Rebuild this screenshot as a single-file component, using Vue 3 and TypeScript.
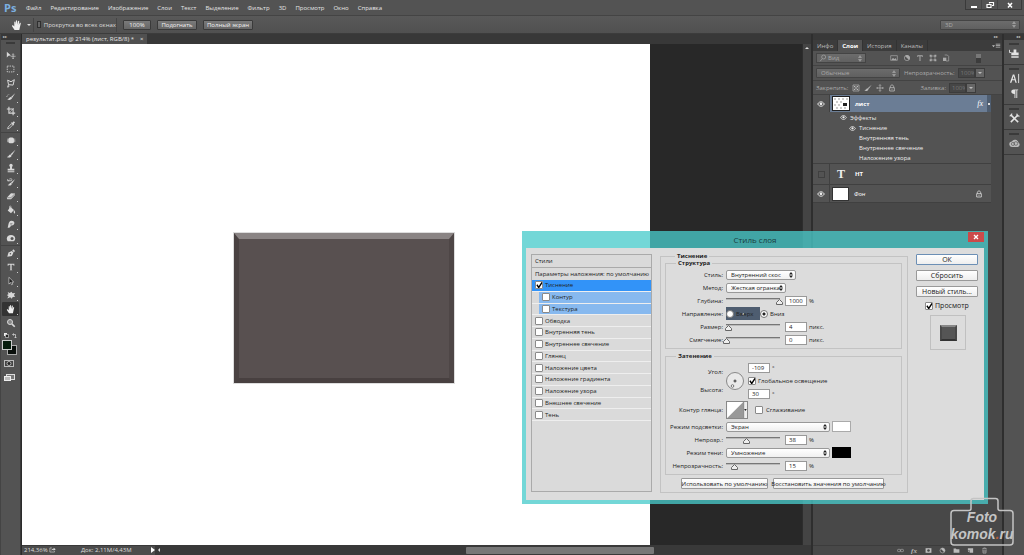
<script setup lang="ts">
import { ref } from 'vue'

const menus = ['Файл', 'Редактирование', 'Изображение', 'Слои', 'Текст', 'Выделение', 'Фильтр', '3D', 'Просмотр', 'Окно', 'Справка']

interface Tool { name: string; art: string; active?: boolean; plain?: boolean }

const hand = '<path d="M3.6 11 1.2 7.4c-.6-1 .5-1.5 1.1-.8l1 1V3.2c0-.9 1.1-.9 1.2 0l.3 2.4.1-3.7c0-.9 1.2-.9 1.2 0l.2 3.7.7-3.3c.2-.9 1.3-.6 1.2.2l-.4 3.6.9-2c.4-.8 1.3-.3 1.1.4L8.900 8.200 8.300 11z" fill="currentColor"/>'

const toolGroups: Tool[][] = [
  [
    { name: 'Перемещение', plain: true, art: '<path d="M1 2v7l2-2 3-.4z" fill="currentColor"/><path d="M8.500 4.500v6M5.500 7.500h6M7.500 5.500l1-1 1 1M7.500 9.500l1 1 1-1" stroke="currentColor" stroke-width=".8" fill="none"/>' },
    { name: 'Прямоугольная область', art: '<rect x="1.500" y="2.500" width="8" height="7" fill="none" stroke="currentColor" stroke-dasharray="1.700 1.100"/>' },
    { name: 'Лассо', art: '<path d="M2 2.500 6 4.500 10 2 8.500 8.500 3 8zM3 8l-1 3 2-1" fill="none" stroke="currentColor" stroke-width="1.200"/>' },
    { name: 'Быстрое выделение', art: '<path d="M11 1.500 6 6l1.300 1.300z" fill="currentColor"/><path d="M6 6c-2 0-2 2.500-4.500 2.700 2 1.500 5.200.8 5.800-1.400z" fill="currentColor"/><path d="M1 6a3 3 0 0 1 3-3" fill="none" stroke="currentColor" stroke-dasharray="1.200 1"/>' },
    { name: 'Рамка', art: '<path d="M3.500 1v7.500H11M1 3.500h7.500V11" fill="none" stroke="currentColor" stroke-width="1.300"/><path d="M4 8 9.500 2.500" stroke="currentColor" stroke-width=".6"/>' },
    { name: 'Пипетка', art: '<path d="M2 10.500 2.500 8.500 6.500 4.500l1.500 1.500-4 4z" fill="none" stroke="currentColor"/><path d="m6 3.500 3 3 .8-.8-.7-.8 1.700-1.900-1.400-1.400-1.900 1.700-.7-.7z" fill="currentColor"/>' },
  ],
  [
    { name: 'Восстанавливающая кисть', art: '<rect x="3" y="3" width="6.500" height="7" rx="2" fill="currentColor"/><path d="M1.200 5h10M1.200 6.500h10M1.200 8h10" stroke="currentColor" stroke-width=".7"/>' },
    { name: 'Кисть', art: '<path d="M11.300 1 5.500 6.200 7 7.500z" fill="currentColor"/><path d="M5.300 6.500C3.500 6.500 3.700 9 1 9.500c2 1.300 5.500.8 5.700-1.800z" fill="currentColor"/>' },
    { name: 'Штамп', art: '<circle cx="6" cy="3" r="2" fill="currentColor"/><path d="M5 4h2l.3 3H10v2H2V7h2.700zM2 10h8v1H2z" fill="currentColor"/>' },
    { name: 'Архивная кисть', art: '<path d="M11 2.500 6 6.500 7.200 8z" fill="currentColor"/><path d="M6 6.800c-2 0-1.500 2-4 2.700 2 1.300 4.800.8 5-1.400z" fill="currentColor"/><path d="M2 4.500h4.500c2-2-.8-3-2.500-2M2 2.500v2h2" fill="none" stroke="currentColor" stroke-width=".9"/>' },
    { name: 'Ластик', art: '<path d="m1 8 5-5.200 4.800.2v1.800L6 9.800 1.500 10z" fill="currentColor"/><path d="m1.500 8 4.300.2L10.500 3.500" fill="none" stroke="#555" stroke-width=".7"/>' },
    { name: 'Заливка', art: '<path d="M2 6.500 5.500 2.500 9.500 6 6 10z" fill="currentColor"/><path d="M4.200 5V2c0-1.200 1.700-1.200 1.700 0v2" fill="none" stroke="currentColor" stroke-width=".8"/><path d="M9.500 6c1.800 1.200 1.800 4 .8 4.300S9 8 9.500 6" fill="currentColor"/>' },
    { name: 'Палец', art: '<path d="m2 10.500 1-4.500c.5-2.300 1.500-4 3.500-4 2.500 0 4 1.500 3.500 3.500-.4 1.800-2 2.500-3.500 2.300L4 10.500z" fill="currentColor"/><path d="M5 5.500h2.800M5 7h2" stroke="#555" stroke-width=".6"/>' },
    { name: 'Губка', art: '<path d="M1 6.500C1 4 3 2.500 6 2.500s5 1.500 5 4-1.500 3.500-3 3.500H3C1.700 10 1 8 1 6.500z" fill="currentColor"/><circle cx="7.300" cy="6.700" r="1.800" fill="#555"/>' },
  ],
  [
    { name: 'Перо', art: '<path d="M1.500 10.500 3 5.500l4-2 2 2-2 4z" fill="currentColor"/><path d="m7.500 3 1.300-1.500 2 2L9.500 5z" fill="currentColor"/><circle cx="5.300" cy="6.800" r=".9" fill="#555"/>' },
    { name: 'Горизонтальный текст', art: '<path d="M2 2h8v2.500H9.200L8.700 3.200H6.800v6l1 .8h-3.600l1-.8v-6H3.300l-.5 1.300H2z" fill="currentColor"/>' },
    { name: 'Выделение контура', art: '<path d="M3.500 1.500v8.200l2-1.900 1.200 2.700 1.400-.6L7 7.200h2.300z" fill="#222" stroke="currentColor" stroke-width=".8"/>' },
    { name: 'Произвольная фигура', art: '<path d="m2 2.500 2.500 1L6.500 2l1.300 1.800L11 3.500 9.500 6l1.500 2-3 .3L7 10.500 5 8.800l-3.500 1.400L3 7.500 1 6l2-.8z" fill="currentColor"/>' },
    { name: 'Рука', active: true, art: hand },
    { name: 'Масштаб', plain: true, art: '<circle cx="4.800" cy="4.800" r="3" fill="#888" stroke="currentColor" stroke-width="1.200"/><path d="m7 7 3.500 3.500" stroke="currentColor" stroke-width="2"/>' },
  ],
]

const styleRows = ref([
  { label: 'Тиснение', on: true, kind: 'current' },
  { label: 'Контур', on: false, kind: 'child' },
  { label: 'Текстура', on: false, kind: 'child' },
  { label: 'Обводка', on: false, kind: '' },
  { label: 'Внутренняя тень', on: false, kind: '' },
  { label: 'Внутреннее свечение', on: false, kind: '' },
  { label: 'Глянец', on: false, kind: '' },
  { label: 'Наложение цвета', on: false, kind: '' },
  { label: 'Наложение градиента', on: false, kind: '' },
  { label: 'Наложение узора', on: false, kind: '' },
  { label: 'Внешнее свечение', on: false, kind: '' },
  { label: 'Тень', on: false, kind: '' },
])

const depth = ref(1000)
const size = ref(4)
const soften = ref(0)
const lightOpacity = ref(38)
const shadeOpacity = ref(15)
const direction = ref('down')
const angle = ref(-109)
const altitude = ref(30)
const globalLight = ref(true)
const smooth = ref(false)
const preview = ref(true)
const scrollAll = ref(false)

const effects = ['Тиснение', 'Внутренняя тень', 'Внутреннее свечение', 'Наложение узора']
const panelTabs = ['Инфо', 'Слои', 'История', 'Каналы']

const filterIcons = [
  '<path d="M1 2.500h10v7H1z" fill="none" stroke="currentColor"/><path d="m2 9 2.500-3.500L6.500 8 8 6l2 3z" fill="currentColor"/>',
  '<circle cx="6" cy="6" r="4" fill="none" stroke="currentColor"/><path d="M3 3a4 4 0 0 1 6 6z" fill="currentColor"/>',
  '<path d="M2 2h8v2.500H9L8.700 3.200H6.700v6l1 .8H4.300l1-.8v-6h-2L3 4.500H2z" fill="currentColor"/>',
  '<path d="M3 3h6v6H3z" fill="none" stroke="currentColor"/><path d="M1 1h3v3H1zM8 1h3v3H8zM1 8h3v3H1zM8 8h3v3H8z" fill="currentColor"/>',
  '<path d="M4 1.500h4l2 2v7H6" fill="none" stroke="currentColor"/><path d="M1.500 5.500h5v5h-5z" fill="currentColor"/>',
]
const lockIcons = [
  '<path d="M1.500 1.500h9v9h-9z" fill="none" stroke="currentColor"/><path d="M3 3h2v2H3zM7 3h2v2H7zM5 5h2v2H5zM3 7h2v2H3zM7 7h2v2H7z" fill="currentColor"/>',
  '<path d="M11.500 1 5.500 6.200 7 7.500z" fill="currentColor"/><path d="M5.300 6.500C3.500 6.500 3.700 9 .5 9.700c2.500 1.300 6 .6 6.200-2z" fill="currentColor"/>',
  '<path d="M6 1v10M1 6h10M4.500 2.500 6 1l1.500 1.500M4.500 9.500 6 11l1.500-1.500M2.500 4.500 1 6l1.500 1.500M9.500 4.500 11 6 9.500 7.500" fill="none" stroke="currentColor"/>',
  '<path d="M3.500 5.500V4c0-3.300 5-3.300 5 0v1.500" fill="none" stroke="currentColor" stroke-width="1.200"/><path d="M2.500 5.500h7v5h-7z" fill="none" stroke="currentColor" stroke-width="1.200"/><path d="M5.500 7h1v2h-1z" fill="currentColor"/>',
]
const footerIcons = [
  { name: 'Связать слои', art: '<rect x=".7" y="4" width="5.500" height="4" rx="2" fill="none" stroke="currentColor"/><rect x="5.800" y="4" width="5.500" height="4" rx="2" fill="none" stroke="currentColor"/>' },
  { name: 'Стиль слоя', art: 'fx' },
  { name: 'Маска', art: '<path d="M1 2h10v8H1z" fill="currentColor"/><circle cx="6" cy="6" r="2.200" fill="#484848"/>' },
  { name: 'Корректирующий слой', art: '<circle cx="6" cy="6" r="4.200" fill="none" stroke="currentColor"/><path d="M3 3a4.200 4.200 0 0 1 6 6z" fill="currentColor"/>' },
  { name: 'Группа', art: '<path d="M1 2.500h4l1 1.200h5V10H1z" fill="currentColor"/>' },
  { name: 'Новый слой', art: '<path d="M1.500 2h9v8H5V6H1.500z" fill="currentColor"/><path d="M1.500 7h2.700v3z" fill="currentColor"/>' },
  { name: 'Удалить', art: '<path d="M2 3h8M4.500 3V1.500h3V3M3 4.500l.5 6h5l.5-6M5 5v4.500M7 5v4.500" fill="none" stroke="currentColor"/>' },
]
const dock = [
  [{ name: 'Источник клонов', art: '<path d="M5 1.500h3v3.500h2.500v3h-8V5H5zM2.500 9h8v1.500h-8z" fill="currentColor"/><path d="M.5 2v3h2" fill="none" stroke="currentColor"/>' }],
  [
    { name: 'Символ', art: '<path d="M1 10.500 4.200 1.500h1.600L8.500 10.500H7L6.300 8H3.500l-.9 2.500zM3.900 6.700H6L5 3.300z" fill="currentColor"/><path d="M10.500 1v10" stroke="currentColor"/>' },
    { name: 'Абзац', art: '<path d="M5 1.500h5v1H9v8.500H8V2.500H7V11H6V6.500C1.500 6.500 1.500 1.500 5 1.500z" fill="currentColor"/>' },
  ],
  [{ name: 'Инструменты', art: '<path d="m2 2 8 8M10 2 2 10" stroke="currentColor" stroke-width="1.700"/><path d="M.8 3.800 3.500.8M8.500.8l.5 2.200 2.500.5" fill="none" stroke="currentColor" stroke-width="1.200"/>' }],
  [{ name: 'Creative Cloud', art: '<path d="M3.500 9.700a3 3 0 0 1-.5-6 4.200 4.200 0 0 1 7.500 1.500 2.500 2.500 0 0 1-.8 4.500z" fill="#bbb"/><circle cx="4.300" cy="6.500" r="1.700" fill="none" stroke="#555" stroke-width=".7"/><circle cx="7.500" cy="6" r="2" fill="none" stroke="#555" stroke-width=".7"/>' }],
]
const eye = '<path d="M1 6c2.500-4.500 7.500-4.500 10 0-2.500 4.500-7.500 4.500-10 0z" fill="none" stroke="currentColor" stroke-width="1.300"/><circle cx="6" cy="5.700" r="2" fill="currentColor"/>'
</script>

<template>
  <div class="app">
    <header class="menubar">
      <span class="logo">Ps</span>
      <nav class="menus">
        <button v-for="m in menus" :key="m" type="button">{{ m }}</button>
      </nav>
      <div class="window-buttons">
        <button type="button" aria-label="Свернуть"><svg viewBox="0 0 12 8"><path d="M3 6h6" stroke="#fff" stroke-width="2" /></svg></button>
        <button type="button" aria-label="Восстановить"><svg viewBox="0 0 12 8"><path d="M5.500 2.500v-1h4v3H8M3 3.500h4v3H3z" fill="none" stroke="#fff" stroke-width="1.200" /></svg></button>
        <button type="button" class="wide" aria-label="Закрыть"><svg viewBox="0 0 12 8"><path d="m4 2 4 4.500M8 2 4 6.500" stroke="#fff" stroke-width="1.500" /></svg></button>
      </div>
    </header>

    <div class="options">
      <button type="button" class="hand" aria-label="Рука"><svg viewBox="0 0 12 12" v-html="hand"></svg><i class="caret"></i></button>
      <label class="scroll-all"><input v-model="scrollAll" type="checkbox" class="dark-check">Прокрутка во всех окнах</label>
      <div class="zooms">
        <button type="button" class="z1">100%</button>
        <button type="button" class="z2">Подогнать</button>
        <button type="button" class="z3">Полный экран</button>
      </div>
      <select class="dark-select workspace" aria-label="Рабочая среда"><option>3D</option></select>
    </div>

    <div class="work">
      <aside class="tools">
        <div class="strip">▸▸</div>
        <div class="grip"></div>
        <div v-for="(g, gi) in toolGroups" :key="gi" class="tool-group">
          <button v-for="t in g" :key="t.name" type="button" :aria-label="t.name" class="tool" :class="{ active: t.active, more: !t.plain }">
            <svg viewBox="0 0 12 12" v-html="t.art"></svg>
          </button>
        </div>
        <svg class="colors" viewBox="0 0 18 54">
          <path d="M3 3h3v3H3z" fill="#eee" /><path d="M4.500 4.500h3v3h-3z" fill="#222" stroke="#ddd" stroke-width=".6" />
          <path d="M12 4.500h2.500V8M13 3.500l-1.500 1L13 5.500M13.500 7l1 1 1-1" fill="none" stroke="#ddd" stroke-width=".7" />
          <rect x="6.500" y="15.500" width="9" height="9" fill="#0a0f0c" stroke="#aaa" />
          <rect x="1.500" y="10.500" width="9" height="9" fill="#071d0d" stroke="#ccc" />
          <rect x="3.500" y="30.500" width="9" height="6" fill="#444" stroke="#bbb" /><circle cx="8" cy="33.500" r="2" fill="#222" stroke="#ccc" stroke-width=".8" />
          <rect x="5.500" y="44.500" width="8" height="5" fill="#777" stroke="#ddd" /><rect x="3.500" y="46.500" width="6" height="4" fill="#bbb" stroke="#eee" />
        </svg>
      </aside>

      <section class="document">
        <div class="doc-tabs"><button type="button" class="doc-tab">результат.psd @ 214% (лист, RGB/8) *<span>×</span></button></div>
        <div class="viewport">
          <div class="canvas"><div class="bevel"></div></div>
          <div class="v-scroll"><i></i></div>
        </div>
        <footer class="status">
          <div class="status-info">
            <span class="percent">214,36%</span>
            <svg viewBox="0 0 12 10"><path d="M5 1.500H1.500v7h8V7" fill="none" stroke="#ddd" /><path d="M4 6c0-2.500 2-3.300 4-3.300V1l3.500 2.700L8 6.300V4.700C6 4.700 5 5 4 6z" fill="#ddd" /></svg>
            <span class="doc-size">Док: 2,11М/4,43М</span>
            <i class="play"></i>
          </div>
          <i class="back"></i>
          <div class="h-thumb"></div>
        </footer>
      </section>

      <aside class="panel">
        <div class="strip right">▸▸</div>
        <div class="panel-tabs">
          <button v-for="t in panelTabs" :key="t" type="button" :class="{ on: t === 'Слои' }">{{ t }}</button>
          <svg class="panel-menu" viewBox="0 0 12 8"><path d="M0 3h4L2 5.500zM5 1h6v1H5zM5 3h6v1H5zM5 5h6v1H5z" fill="#bbb" /></svg>
        </div>
        <div class="panel-row">
          <div class="kind"><svg viewBox="0 0 12 12"><circle cx="7" cy="4.500" r="3" fill="none" stroke="currentColor" /><path d="M5 7 1.500 11" stroke="currentColor" /></svg>
            <select class="dark-select" aria-label="Фильтр слоёв"><option>Вид</option></select></div>
          <div class="icons filter"><svg v-for="(a, i) in filterIcons" :key="i" viewBox="0 0 12 12" v-html="a"></svg></div>
          <i class="switch"></i>
        </div>
        <div class="panel-row">
          <select class="dark-select blend" aria-label="Режим наложения"><option>Обычные</option></select>
          <label class="amount">Непрозрачность:<input value="100%" readonly><i class="drop"></i></label>
        </div>
        <div class="panel-row last">
          <span>Закрепить:</span>
          <div class="icons lock"><svg v-for="(a, i) in lockIcons" :key="i" viewBox="0 0 12 12" v-html="a"></svg></div>
          <label class="amount">Заливка:<input value="100%" readonly><i class="drop"></i></label>
        </div>
        <div class="layers">
          <div class="layer selected">
            <button type="button" class="eye" aria-label="Видимость"><svg viewBox="0 0 12 12" v-html="eye"></svg></button>
            <div class="layer-body">
              <svg class="thumb" viewBox="0 0 18 15"><rect x=".5" y=".5" width="17" height="14" fill="#fff" stroke="#222" /><path d="M2 2h2v2H2zM6 2h2v2H6zM10 2h2v2h-2zM14 2h2v2h-2zM4 5h2v2H4zM8 5h2v2H8zM2 8h2v2H2zM6 8h2v2H6zM4 11h2v2H4zM8 11h2v2H8zM12 11h2v2h-2z" fill="#ccc" /><path d="M11 7h4v3h-4z" fill="#222" /></svg>
              <b class="name">лист</b><em class="fx">fx</em><i class="up"></i>
            </div>
          </div>
          <div class="effects">
            <div class="effect root"><svg viewBox="0 0 12 12" v-html="eye"></svg>Эффекты</div>
            <div v-for="(e, i) in effects" :key="e" class="effect"><svg v-if="i === 0" viewBox="0 0 12 12" v-html="eye"></svg><span>{{ e }}</span></div>
          </div>
          <div class="layer">
            <button type="button" class="eye" aria-label="Видимость"><i class="hidden-eye"></i></button>
            <div class="layer-body tall"><span class="type">T</span><b class="name">НТ</b></div>
          </div>
          <div class="layer">
            <button type="button" class="eye" aria-label="Видимость"><svg viewBox="0 0 12 12" v-html="eye"></svg></button>
            <div class="layer-body"><div class="white-thumb"></div><em class="name">Фон</em><svg class="padlock" viewBox="0 0 12 12" v-html="lockIcons[3]"></svg></div>
          </div>
        </div>
        <footer class="panel-footer">
          <button v-for="f in footerIcons" :key="f.name" type="button" :aria-label="f.name">
            <em v-if="f.art === 'fx'">fx</em><svg v-else viewBox="0 0 12 12" v-html="f.art"></svg>
          </button>
        </footer>
      </aside>

      <aside class="dock">
        <div class="strip right">◂◂</div>
        <div v-for="(g, i) in dock" :key="i" class="dock-group">
          <div class="grip"></div>
          <button v-for="d in g" :key="d.name" type="button" :aria-label="d.name"><svg viewBox="0 0 12 12" v-html="d.art"></svg></button>
        </div>
      </aside>
    </div>

    <div class="dialog" role="dialog" aria-labelledby="dlg-title">
      <div class="title"><h1 id="dlg-title">Стиль слоя</h1><button type="button" class="close" aria-label="Закрыть"><svg viewBox="0 0 8 8"><path d="m2 2 4 4M6 2 2 6" stroke="#fff" stroke-width="1.300" /></svg></button></div>
      <div class="dialog-body">
        <div class="styles">
          <div class="styles-head">Стили</div>
          <div class="styles-params">Параметры наложения: по умолчанию</div>
          <div class="style-rows">
            <label v-for="s in styleRows" :key="s.label" class="style-row" :class="s.kind"><span class="fill"><input v-model="s.on" type="checkbox" class="check">{{ s.label }}</span></label>
          </div>
        </div>

        <fieldset class="outer">
          <legend>Тиснение</legend>
          <fieldset class="group">
            <legend>Структура</legend>
            <div class="row"><label for="f-style">Стиль:</label><select id="f-style" class="select w-style"><option>Внутренний скос</option></select></div>
            <div class="row"><label for="f-method">Метод:</label><select id="f-method" class="select w-method"><option>Жесткая огранка</option></select></div>
            <div class="row"><label for="f-depth">Глубина:</label><input id="f-depth" v-model="depth" type="range" min="1" max="1000"><input v-model="depth" class="num" aria-label="Глубина, %"><span>%</span></div>
            <div class="row"><span class="lbl">Направление:</span><label class="radio up"><input v-model="direction" type="radio" value="up">Вверх</label><label class="radio"><input v-model="direction" type="radio" value="down">Вниз</label></div>
            <div class="row"><label for="f-size">Размер:</label><input id="f-size" v-model="size" type="range" min="0" max="100"><input v-model="size" class="num" aria-label="Размер, пикс."><span>пикс.</span></div>
            <div class="row"><label for="f-soft">Смягчение:</label><input id="f-soft" v-model="soften" type="range" min="0" max="16"><input v-model="soften" class="num" aria-label="Смягчение, пикс."><span>пикс.</span></div>
          </fieldset>
          <fieldset class="group">
            <legend>Затенение</legend>
            <div class="light">
              <div class="light-labels"><label for="f-angle">Угол:</label><label for="f-alt">Высота:</label></div>
              <svg class="dial" viewBox="0 0 18 18"><circle cx="9" cy="9" r="8.500" fill="#e9e9e9" stroke="#888" /><path d="M7.500 9h3M9 7.500v3" stroke="#333" /><circle cx="6.500" cy="14" r="1.300" fill="#fff" stroke="#555" stroke-width=".8" /></svg>
              <div class="light-fields">
                <div><input id="f-angle" v-model="angle" class="num"><span>°</span></div>
                <label><input v-model="globalLight" type="checkbox" class="check">Глобальное освещение</label>
                <div><input id="f-alt" v-model="altitude" class="num"><span>°</span></div>
              </div>
            </div>
            <div class="row contour"><span class="lbl">Контур глянца:</span><button type="button" class="curve" aria-label="Контур глянца"><svg viewBox="0 0 22 18"><path d="M0 0h18v18H0z" fill="#fff" /><path d="M0 18 18 0v18z" fill="#999" /><path d="M18.500 0v18" stroke="#777" /><path d="M19 8h3l-1.500 2z" fill="#222" /></svg></button><label class="smooth"><input v-model="smooth" type="checkbox" class="check">Сглаживание</label></div>
            <div class="row"><label for="f-light">Режим подсветки:</label><select id="f-light" class="select w-mode"><option>Экран</option></select><button type="button" class="swatch" aria-label="Цвет подсветки"></button></div>
            <div class="row"><label for="f-lo">Непрозр.:</label><input id="f-lo" v-model="lightOpacity" type="range" min="0" max="100"><input v-model="lightOpacity" class="num" aria-label="Непрозр., %"><span>%</span></div>
            <div class="row"><label for="f-shade">Режим тени:</label><select id="f-shade" class="select w-mode"><option>Умножение</option></select><button type="button" class="swatch black" aria-label="Цвет тени"></button></div>
            <div class="row"><label for="f-so">Непрозрачность:</label><input id="f-so" v-model="shadeOpacity" type="range" min="0" max="100"><input v-model="shadeOpacity" class="num" aria-label="Непрозрачность, %"><span>%</span></div>
          </fieldset>
          <div class="defaults"><button type="button" class="btn d1">Использовать по умолчанию</button><button type="button" class="btn d2">Восстановить значения по умолчанию</button></div>
        </fieldset>

        <div class="actions">
          <button type="button" class="btn primary">ОК</button>
          <button type="button" class="btn">Сбросить</button>
          <button type="button" class="btn">Новый стиль...</button>
          <label class="preview-check"><input v-model="preview" type="checkbox" class="check">Просмотр</label>
          <div class="preview"><i></i></div>
        </div>
      </div>
    </div>

    <div class="watermark">
      <svg viewBox="0 0 66 50"><path d="M5 13.500h15q2 0 2-2V4q0-2.500 2.500-2.500h22Q49 1.500 49 4v7.500q0 2 2 2h10q3 0 3 3V45q0 3-3 3H5q-3 0-3-3V16.500q0-3 3-3z" fill="none" stroke="#c4c4c4" stroke-width="1.500" /></svg>
      <p><span>Foto</span><span>komok<b>.</b>ru</span></p>
    </div>
  </div>
</template>

<style>
html, body { margin: 0; background: #535353; }
</style>

<style scoped>
.app { position: relative; display: flex; flex-direction: column; min-height: 100vh; overflow: hidden; background: #535353; color: #ddd; font: 6px/8px "Open Sans", "Noto Sans", sans-serif; }
.app * { box-sizing: border-box; }
button, input, select { font: inherit; color: inherit; margin: 0; padding: 0; border: 0; background: none; border-radius: 0; }
button { display: flex; align-items: center; justify-content: center; white-space: nowrap; }
select, input { appearance: none; outline: none; }
label, span { white-space: nowrap; }
svg { display: block; flex: none; }

.menubar { display: flex; height: 15px; align-items: center; background: #535353; }
.logo { width: 22px; padding-left: 4px; color: #7cb0e0; font: bold 11px/14px "Open Sans", sans-serif; }
.menus { display: flex; flex: 1; gap: 9px; padding-left: 4px; color: #e6e6e6; }
.window-buttons { display: flex; align-self: flex-start; height: 10px; margin-right: 2px; border: 1px solid #3a3a3a; border-top: 0; }
.window-buttons button { width: 16px; border-right: 1px solid #444; }
.window-buttons .wide { width: 23px; border: 0; }
.window-buttons svg { width: 12px; height: 8px; }

.options { display: flex; align-items: center; height: 19px; border-top: 1px solid #444; border-bottom: 1px solid #3c3c3c; background: linear-gradient(#595959, #505050); }
.hand { width: 34px; height: 14px; padding-left: 8px; gap: 4px; border-right: 1px solid #454545; color: #eee; }
.hand svg { width: 12px; height: 12px; }
.caret { border: 2px solid transparent; border-top-color: #ddd; border-bottom: 0; }
.scroll-all { display: flex; align-items: center; gap: 3px; width: 83px; height: 14px; padding-left: 3px; border-right: 1px solid #454545; }
.dark-check { width: 7px; height: 7px; border: 1px solid #2f2f2f; background: #666; }
.zooms { display: flex; flex: 1; gap: 6px; padding-left: 6px; }
.zooms button { height: 10px; border: 1px solid #3a3a3a; border-radius: 1px; background: linear-gradient(#7a7a7a, #666); color: #f2f2f2; }
.z1 { width: 28px; } .z2 { width: 40px; } .z3 { width: 50px; }
.dark-select { height: 10px; padding: 0 4px; border: 1px solid #444; border-radius: 1px; color: #aaa; background: url("data:image/svg+xml,%3Csvg xmlns='http://www.w3.org/2000/svg' width='5' height='7'%3E%3Cpath d='M0 3 2 0l2 3zM0 4l2 3 2-3z' fill='%23999'/%3E%3C/svg%3E") right 2px center no-repeat, linear-gradient(#6c6c6c, #606060); }
.workspace { width: 80px; margin-right: 4px; }

.work { display: flex; flex: 1; }
.strip { height: 6px; padding-left: 2px; background: #383838; color: #ccc; font: 4px/6px "DejaVu Sans", sans-serif; }
.strip.right { padding: 0 4px 0 0; text-align: right; }
.grip { height: 2px; margin: 2px 5px 1px; background: #3a3a3a; }
.tools { width: 21px; border-left: 1px solid #444; border-right: 1px solid #3a3a3a; }
.tools .grip { margin-bottom: 4px; }
.tool-group + .tool-group { border-top: 1px solid #434343; }
.tool { position: relative; width: 17px; height: 14px; margin-left: 1px; color: #d8d8d8; }
.tool svg { width: 10px; height: 10px; }
.tool.active { background: #333; color: #eee; border-radius: 1px; }
.tool.more::after { content: ""; position: absolute; right: 1px; bottom: 1px; width: 1px; height: 1px; background: #ccc; }
.colors { width: 18px; height: 54px; }

.document { display: flex; flex: 1; flex-direction: column; min-width: 0; border-left: 1px solid #2b2b2b; background: #393939; }
.doc-tabs { display: flex; height: 10px; background: #383838; }
.doc-tab { gap: 6px; padding: 0 4px; background: #505050; color: #e4e4e4; }
.viewport { display: flex; flex: 1; background: #282828; }
.canvas { width: 628px; background: #fff; }
.bevel { width: 220px; height: 150px; margin: 189px 0 0 212px; border: 5px solid; border-top-width: 6px; border-color: #8a8484 #4e4646 #484040 #4a4242; background: #585050; outline: 1px solid #ddd; }
.v-scroll { width: 9px; margin-left: auto; padding-top: 3px; background: #444; border-left: 1px solid #2d2d2d; }
.v-scroll i { display: block; width: 0; margin: 0 auto; border: 2px solid transparent; border-bottom-color: #ddd; border-top: 0; }
.status { display: flex; align-items: center; height: 10px; background: #393939; }
.status-info { display: flex; align-items: center; width: 133px; height: 9px; padding-left: 2px; background: #4c4c4c; }
.status-info svg { width: 7px; height: 6px; margin-left: 3px; }
.percent { width: 22px; }
.doc-size { flex: 1; padding-left: 25px; }
.play { border: 3px solid transparent; border-left: 4px solid #fff; border-right: 0; }
.back { margin-left: 3px; border: 2px solid transparent; border-right-color: #ddd; border-left: 0; }
.h-thumb { width: 188px; height: 7px; margin-left: 306px; background: #777; border-radius: 1px; }

.panel { display: flex; flex-direction: column; width: 193px; border-left: 2px solid #2e2e2e; border-right: 2px solid #2e2e2e; background: #484848; }
.panel-tabs { display: flex; height: 11px; background: #3c3c3c; color: #bbb; }
.panel-tabs button { padding: 0 4px; border-right: 1px solid #333; }
.panel-tabs .on { background: #535353; color: #fff; font-weight: bold; }
.panel-menu { width: 9px; height: 6px; margin: 3px 1px 0 auto; }
.panel-row { display: flex; align-items: center; height: 15px; padding-left: 3px; border-bottom: 1px solid #434343; background: #535353; color: #aaa; }
.panel-row.last { height: 14px; }
.kind { display: flex; align-items: center; width: 50px; height: 10px; border: 1px solid #444; background: #646464; }
.kind svg { width: 8px; height: 8px; margin-left: 2px; }
.kind select { flex: 1; height: 8px; padding: 0 1px; border: 0; }
.icons { display: flex; align-items: center; color: #aaa; }
.icons svg { width: 8px; height: 8px; }
.filter { gap: 5px; padding-left: 24px; }
.lock { gap: 4px; padding-left: 4px; flex: 1; color: #bbb; }
.switch { width: 5px; height: 9px; margin-left: 26px; background: linear-gradient(#777 40%, #3c3c3c 40%); }
.blend { width: 84px; }
.amount { display: flex; align-items: center; margin-left: 4px; }
.last .amount { margin: 0 26px 0 0; }
.amount input { width: 17px; height: 10px; margin-left: 3px; padding-left: 2px; border: 1px solid #3c3c3c; background: #464646; color: #777; }
.drop { display: flex; align-items: center; justify-content: center; width: 10px; height: 10px; border: 1px solid #3c3c3c; background: #666; }
.drop::after { content: ""; border: 2px solid transparent; border-top-color: #bbb; border-bottom: 0; }
.layers { flex: 1; margin-right: 11px; background: #484848; }
.layer { display: flex; background: #535353; border-bottom: 1px solid #404040; }
.eye { width: 17px; border-right: 1px solid #404040; color: #eee; }
.eye svg { width: 8px; height: 8px; }
.layer-body { display: flex; flex: 1; align-items: center; height: 17px; padding-left: 2px; }
.layer-body.tall { height: 20px; }
.selected { border-bottom: 0; }
.selected .layer-body { background: #6b7d95; }
.thumb { width: 18px; height: 15px; }
.name { margin-left: 5px; color: #fff; }
.fx { margin-left: auto; padding-right: 4px; font: italic 8px/9px "Liberation Serif", serif; color: #fff; }
.up { align-self: stretch; width: 4px; background: linear-gradient(#ddd, #ddd) center / 2px 2px no-repeat, #4e5d70; }
.effects { height: 52px; padding-left: 46px; border-bottom: 1px solid #404040; background: #535353; color: #eee; }
.effect { display: flex; align-items: center; height: 10px; position: relative; }
.effect svg { width: 7px; height: 7px; margin: 0 3px 0 -10px; }
.effect.root { height: 11px; margin-left: -10px; }
.effect.root svg { margin: 0 3px 0 0; }
.effect.root { margin-left: -19px; }
.hidden-eye { width: 7px; height: 7px; border: 1px solid #404040; }
.type { width: 18px; text-align: center; font: bold 12px/14px "Liberation Serif", serif; color: #eee; }
.white-thumb { width: 17px; height: 14px; border: 1px solid #333; background: #fff; }
.padlock { width: 8px; height: 8px; margin: 0 8px 0 auto; color: #ddd; }
.panel-footer { display: flex; align-items: center; gap: 6px; height: 10px; padding-left: 83px; border-top: 1px solid #3c3c3c; color: #bbb; }
.panel-footer button { width: 8px; }
.panel-footer svg { width: 7px; height: 7px; }
.panel-footer em { font: italic bold 7px/8px "Liberation Serif", serif; }
.dock { width: 20px; }
.dock-group { padding: 1px 0 3px; border-bottom: 1px solid #3a3a3a; }
.dock-group button { width: 20px; height: 15px; color: #e4e4e4; }
.dock-group svg { width: 11px; height: 11px; }

.dialog { position: absolute; right: 36px; bottom: 51px; width: 466px; padding: 0 4px 4px; background: rgba(73, 203, 203, .77); color: #222; font-size: 6px; line-height: 8px; }
.title { display: flex; height: 17px; justify-content: center; }
h1 { margin: 0; font: 8px/17px "Open Sans", sans-serif; color: #1b3c3c; }
.close { position: absolute; top: 1px; right: 4px; width: 16px; height: 10px; background: #cb4a4a; }
.close svg { width: 8px; height: 8px; }
.dialog-body { display: flex; align-items: flex-start; padding: 5px 6px 7px 5px; background: #dcdcdc; }
.styles { align-self: stretch; width: 121px; margin: 1px 0; border: 1px solid #aaa; background: #dadada; }
.styles-head { height: 13px; padding-left: 3px; border-bottom: 1px solid #aaa; line-height: 13px; }
.styles-params { height: 12px; padding-left: 3px; line-height: 12px; white-space: nowrap; }
.style-rows { display: grid; height: 141px; grid-auto-rows: 1fr; }
.style-row { display: block; border-bottom: 1px solid #eee; }
.fill { display: flex; align-items: center; gap: 2px; height: 100%; padding-left: 3px; }
.current .fill { background: #3293f8; }
.child .fill { margin-left: 7px; background: #87b9ef; }
.check { flex: none; width: 8px; height: 8px; border: 1px solid #8a8a8a; border-radius: 1px; background: #fff; }
.check:checked { background: #fff url("data:image/svg+xml,%3Csvg xmlns='http://www.w3.org/2000/svg' viewBox='0 0 8 8'%3E%3Cpath d='m1.500 3.500 2 2.800L7 1' fill='none' stroke='%23000' stroke-width='1.500'/%3E%3C/svg%3E") center / 7px 7px no-repeat; }

fieldset { margin: 0; padding: 0; min-width: 0; border: 1px solid #c3c3c3; }
legend { height: 7px; margin-left: 10px; padding: 0 2px; font-weight: bold; line-height: 7px; }
.outer { width: 248px; margin-left: 8px; padding: 0 5px 3px 4px; }
.group { padding: 1px 0 2px; }
.group + .group { margin-top: 4px; }
.row { display: flex; align-items: center; height: 13px; }
.row > label:first-child, .lbl { flex: none; width: 57px; margin-right: 3px; text-align: right; }
.select { height: 10px; padding: 0 4px; border: 1px solid #999; border-radius: 2px; background: url("data:image/svg+xml,%3Csvg xmlns='http://www.w3.org/2000/svg' width='4' height='6'%3E%3Cpath d='M0 2.500 2 0l2 2.500zM0 3.500 2 6l2-2.500z' fill='%23222'/%3E%3C/svg%3E") right 2px center no-repeat, linear-gradient(#fff, #f0f0f0); }
.w-style { width: 70px; } .w-method { width: 60px; } .w-mode { width: 104px; }
.num { width: 22px; height: 10px; padding: 0 3px; border: 1px solid #999; background: #fff; }
.row > .num { margin: 0 2px 0 2px; }
input[type="range"] { width: 60px; height: 10px; margin-left: -3px; }
input[type="range"]::-webkit-slider-runnable-track { height: 10px; background: linear-gradient(#777 1px, #bbb 1px) center 2px / 54px 2px no-repeat; }
input[type="range"]::-webkit-slider-thumb { appearance: none; width: 7px; height: 6px; margin-top: 3px; background: url("data:image/svg+xml,%3Csvg xmlns='http://www.w3.org/2000/svg' width='7' height='6'%3E%3Cpath d='M.5 5.500v-2l3-3 3 3v2z' fill='%23eee' stroke='%23666'/%3E%3C/svg%3E") no-repeat; }
.radio { display: flex; align-items: center; gap: 2px; }
.radio.up { width: 34px; }
.radio input { width: 8px; height: 8px; border: 1px solid #777; border-radius: 50%; background: #fff; }
.radio input:checked { background: radial-gradient(circle, #222 1px, #fff 2px); }
.light { display: flex; align-items: center; height: 39px; }
.light-labels { display: flex; flex-direction: column; gap: 10px; width: 57px; margin-right: 3px; text-align: right; }
.dial { width: 18px; height: 18px; margin-right: 4px; }
.light-fields > * { display: flex; align-items: center; gap: 2px; height: 13px; }
.row.contour { height: 20px; }
.curve { width: 22px; height: 18px; border: 1px solid #888; background: #eee; }
.curve svg { width: 20px; height: 16px; }
.smooth { display: flex; align-items: center; gap: 3px; margin-left: 7px; }
.swatch { width: 19px; height: 11px; margin-left: 2px; border: 1px solid #aaa; background: #fff; }
.swatch.black { background: #000; border-color: #000; }
.btn { height: 11px; border: 1px solid #999; border-radius: 1px; background: linear-gradient(#fff, #eee); }
.defaults { display: flex; gap: 5px; margin-top: 3px; padding-left: 16px; }
.d1 { width: 87px; } .d2 { width: 111px; }
.actions { display: flex; flex: 1; flex-direction: column; gap: 5px; margin: 1px 0 0 8px; }
.actions .btn { font-size: 7px; }
.primary { border-color: #6c8fb5; }
.preview-check { display: flex; align-items: center; gap: 2px; height: 8px; padding-left: 9px; font-size: 7px; }
.preview { display: flex; align-items: center; justify-content: center; width: 36px; height: 35px; margin-left: 14px; border: 1px solid #c0c0c0; }
.preview i { width: 17px; height: 16px; border: 2px solid; border-color: #888 #484848 #333 #484848; background: #555; }

.watermark { position: absolute; right: 9px; bottom: 8px; width: 66px; height: 50px; color: #c4c4c4; }
.watermark svg { width: 66px; height: 50px; }
.watermark p { position: absolute; top: 12px; left: 0; width: 66px; margin: 0; text-align: center; font: italic bold 14px/17px "Liberation Sans", sans-serif; }
.watermark span { display: block; }
.watermark b { color: #b5603c; }
</style>
